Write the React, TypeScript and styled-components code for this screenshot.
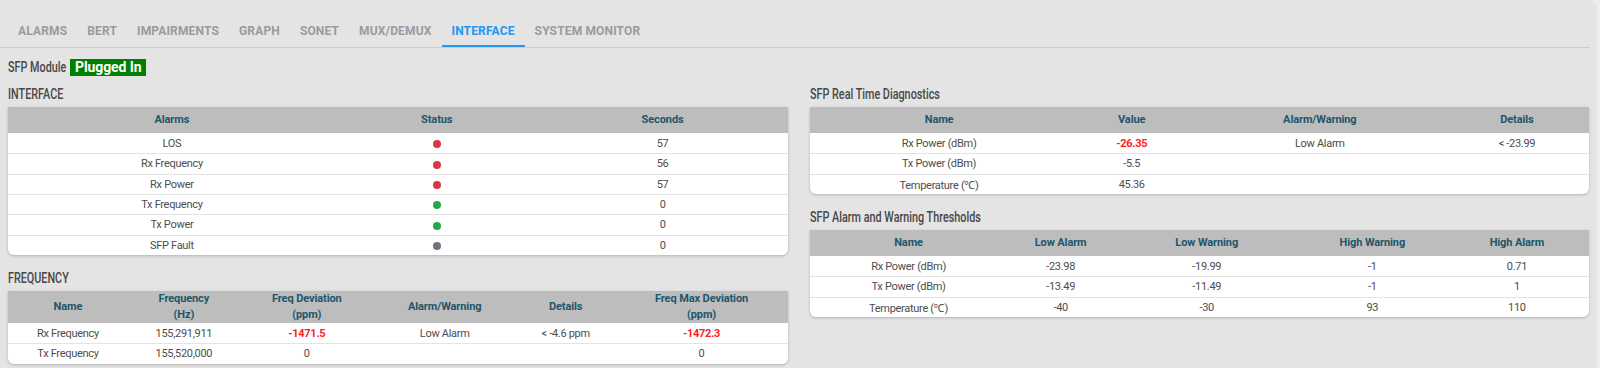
import React from 'react';
import styled, { createGlobalStyle } from 'styled-components';

const Global = createGlobalStyle`
  html, body { margin: 0; padding: 0; background: #ededed; }
  body { font-family: Roboto, "Noto Sans", Arial, sans-serif; }
  * { box-sizing: border-box; }
`;

const Panel = styled.div`
  background: #e4e4e4;
  margin-right: 3px;
  border-top-right-radius: 8px;
  height: 368px;
  overflow: hidden;
`;

const TabBar = styled.nav`
  display: flex;
  padding: 15px 0 0 8px;
  margin-right: 7px;
  border-bottom: 1px solid #cdcdcd;
`;

const Tab = styled.div<{ $active?: boolean }>`
  height: 32px;
  padding: 2px 10px 0;
  display: flex;
  align-items: center;
  font-size: 12px;
  font-weight: 700;
  letter-spacing: 0.15px;
  text-transform: uppercase;
  color: ${(p) => (p.$active ? '#2196f3' : '#9b9b9b')};
  border-bottom: 2px solid ${(p) => (p.$active ? '#2196f3' : 'transparent')};
  white-space: nowrap;
`;

const Content = styled.div`
  padding: 10px 8px 0;
`;

const ModuleRow = styled.div`
  display: flex;
  align-items: center;
  gap: 4px;
  height: 18px;
`;

const Heading = styled.div`
  height: 16px;
  line-height: 16px;
  font-size: 15px;
  font-weight: 500;
  color: #474747;
  white-space: nowrap;
  transform: scaleX(0.72);
  transform-origin: left center;
`;

const ModuleLabel = styled(Heading)`
  width: 58px;
`;

const Badge = styled.span`
  display: inline-flex;
  align-items: center;
  height: 17px;
  padding: 0 5px;
  background: #008000;
  color: #ffffff;
  font-size: 14px;
  font-weight: 700;
  letter-spacing: -0.1px;
`;

const Columns = styled.div`
  display: grid;
  grid-template-columns: 1fr 1fr;
  column-gap: 22px;
  margin-top: 10px;
  align-items: start;
`;

const Column = styled.div`
  display: flex;
  flex-direction: column;
  gap: 15px;
`;

const Section = styled.section`
  display: flex;
  flex-direction: column;
  gap: 5px;
`;

const Card = styled.div`
  background: #ffffff;
  border-radius: 0 0 6px 6px;
  box-shadow: 0 1px 3px rgba(0, 0, 0, 0.22);
  overflow: hidden;
`;

const Table = styled.table`
  width: 100%;
  border-collapse: separate;
  border-spacing: 0;
  table-layout: fixed;
`;

const Col = styled.col<{ $w: number }>`
  width: ${(p) => p.$w}%;
`;

const HeadRow = styled.tr<{ $h: number }>`
  height: ${(p) => p.$h}px;
`;

const Th = styled.th`
  background: #bdbdbd;
  color: #1d566b;
  font-size: 11px;
  font-weight: 700;
  line-height: 16px;
  padding: 0 4px;
  text-align: center;
  vertical-align: middle;
  letter-spacing: -0.1px;
`;

const BodyRow = styled.tr`
  height: 20.33px;
  & + & td {
    border-top: 1px solid #e4e4e4;
  }
`;

const Td = styled.td<{ $red?: boolean }>`
  font-size: 11px;
  font-weight: ${(p) => (p.$red ? 700 : 400)};
  color: ${(p) => (p.$red ? '#ff1c1c' : '#4d4d4d')};
  letter-spacing: -0.3px;
  padding: 0 4px;
  text-align: center;
  vertical-align: middle;
  white-space: nowrap;
`;

const Dot = styled.span<{ $c: string }>`
  display: inline-block;
  width: 8px;
  height: 8px;
  border-radius: 50%;
  background: ${(p) => p.$c};
  vertical-align: middle;
`;

type Cell = string | { v: string; red?: boolean } | { dot: string };

interface TableProps {
  cols: { label: React.ReactNode; w: number }[];
  rows: Cell[][];
  headH?: number;
}

function DataTable({ cols, rows, headH = 26 }: TableProps) {
  const total = cols.reduce((s, c) => s + c.w, 0);
  return (
    <Table>
      <colgroup>
        {cols.map((c, i) => (
          <Col key={i} $w={(c.w / total) * 100} />
        ))}
      </colgroup>
      <thead>
        <HeadRow $h={headH}>
          {cols.map((c, i) => (
            <Th key={i}>{c.label}</Th>
          ))}
        </HeadRow>
      </thead>
      <tbody>
        {rows.map((r, ri) => (
          <BodyRow key={ri}>
            {r.map((cell, ci) => {
              if (typeof cell === 'string') return <Td key={ci}>{cell}</Td>;
              if ('dot' in cell)
                return (
                  <Td key={ci}>
                    <Dot $c={cell.dot} />
                  </Td>
                );
              return (
                <Td key={ci} $red={cell.red}>
                  {cell.v}
                </Td>
              );
            })}
          </BodyRow>
        ))}
      </tbody>
    </Table>
  );
}

const RED = '#dc3545';
const GREEN = '#28a745';
const GREY = '#6c757d';

const tabs = ['Alarms', 'BERT', 'Impairments', 'Graph', 'SONET', 'MUX/DEMUX', 'Interface', 'System Monitor'];

export default function App() {
  return (
    <>
      <Global />
      <Panel>
        <TabBar>
          {tabs.map((t) => (
            <Tab key={t} $active={t === 'Interface'}>
              {t}
            </Tab>
          ))}
        </TabBar>
        <Content>
          <ModuleRow>
            <ModuleLabel as="span">SFP Module</ModuleLabel>
            <Badge>Plugged In</Badge>
          </ModuleRow>
          <Columns>
            <Column>
              <Section>
                <Heading>INTERFACE</Heading>
                <Card>
                  <DataTable
                    cols={[
                      { label: 'Alarms', w: 328 },
                      { label: 'Status', w: 202 },
                      { label: 'Seconds', w: 250 },
                    ]}
                    rows={[
                      ['LOS', { dot: RED }, '57'],
                      ['Rx Frequency', { dot: RED }, '56'],
                      ['Rx Power', { dot: RED }, '57'],
                      ['Tx Frequency', { dot: GREEN }, '0'],
                      ['Tx Power', { dot: GREEN }, '0'],
                      ['SFP Fault', { dot: GREY }, '0'],
                    ]}
                  />
                </Card>
              </Section>
              <Section>
                <Heading>FREQUENCY</Heading>
                <Card>
                  <DataTable
                    headH={32}
                    cols={[
                      { label: 'Name', w: 120 },
                      { label: <>Frequency<br />(Hz)</>, w: 112 },
                      { label: <>Freq Deviation<br />(ppm)</>, w: 134 },
                      { label: 'Alarm/Warning', w: 142 },
                      { label: 'Details', w: 100 },
                      { label: <>Freq Max Deviation<br />(ppm)</>, w: 172 },
                    ]}
                    rows={[
                      ['Rx Frequency', '155,291,911', { v: '-1471.5', red: true }, 'Low Alarm', '< -4.6 ppm', { v: '-1472.3', red: true }],
                      ['Tx Frequency', '155,520,000', '0', '', '', '0'],
                    ]}
                  />
                </Card>
              </Section>
            </Column>
            <Column>
              <Section>
                <Heading>SFP Real Time Diagnostics</Heading>
                <Card>
                  <DataTable
                    cols={[
                      { label: 'Name', w: 259 },
                      { label: 'Value', w: 126 },
                      { label: 'Alarm/Warning', w: 250 },
                      { label: 'Details', w: 144 },
                    ]}
                    rows={[
                      ['Rx Power (dBm)', { v: '-26.35', red: true }, 'Low Alarm', '< -23.99'],
                      ['Tx Power (dBm)', '-5.5', '', ''],
                      ['Temperature (℃)', '45.36', '', ''],
                    ]}
                  />
                </Card>
              </Section>
              <Section>
                <Heading>SFP Alarm and Warning Thresholds</Heading>
                <Card>
                  <DataTable
                    cols={[
                      { label: 'Name', w: 198 },
                      { label: 'Low Alarm', w: 106 },
                      { label: 'Low Warning', w: 186 },
                      { label: 'High Warning', w: 145 },
                      { label: 'High Alarm', w: 144 },
                    ]}
                    rows={[
                      ['Rx Power (dBm)', '-23.98', '-19.99', '-1', '0.71'],
                      ['Tx Power (dBm)', '-13.49', '-11.49', '-1', '1'],
                      ['Temperature (℃)', '-40', '-30', '93', '110'],
                    ]}
                  />
                </Card>
              </Section>
            </Column>
          </Columns>
        </Content>
      </Panel>
    </>
  );
}
